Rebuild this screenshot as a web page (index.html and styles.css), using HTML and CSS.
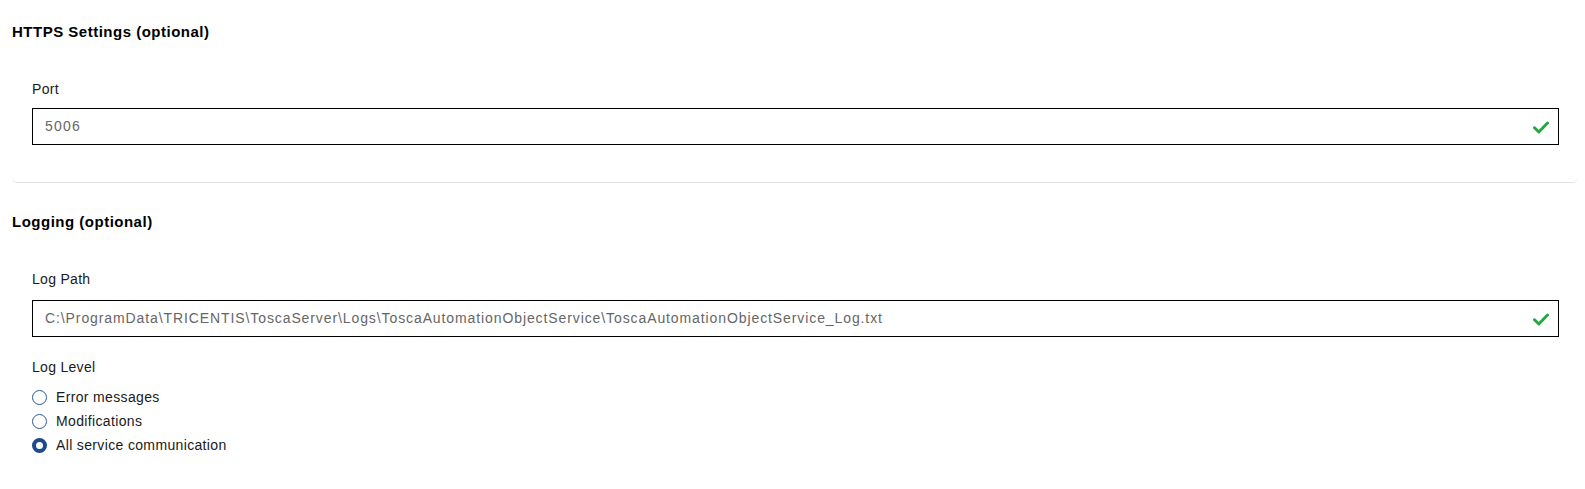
FILE: index.html
```html
<!DOCTYPE html>
<html>
<head>
<meta charset="utf-8">
<link rel="stylesheet" href="styles.css">
</head>
<body>
<div class="page">
  <section class="card first">
    <h2 class="title">HTTPS Settings (optional)</h2>
    <div class="field">
      <label class="label">Port</label>
      <div class="input">
        <span class="value">5006</span>
        <svg class="check" width="16" height="13" viewBox="0 0 16 13"><path d="M1.5 6.8 L5.8 11 L14.5 2" fill="none" stroke="#28a745" stroke-width="3" stroke-linecap="round" stroke-linejoin="round"/></svg>
      </div>
    </div>
  </section>
  <section class="card second">
    <h2 class="title">Logging (optional)</h2>
    <div class="field">
      <label class="label">Log Path</label>
      <div class="input path">
        <span class="value">C:\ProgramData\TRICENTIS\ToscaServer\Logs\ToscaAutomationObjectService\ToscaAutomationObjectService_Log.txt</span>
        <svg class="check" width="16" height="13" viewBox="0 0 16 13"><path d="M1.5 6.8 L5.8 11 L14.5 2" fill="none" stroke="#28a745" stroke-width="3" stroke-linecap="round" stroke-linejoin="round"/></svg>
      </div>
      <label class="label level">Log Level</label>
      <div class="radios">
        <div class="radio"><span class="dot"></span><span class="rtext">Error messages</span></div>
        <div class="radio"><span class="dot"></span><span class="rtext">Modifications</span></div>
        <div class="radio"><span class="dot on"></span><span class="rtext">All service communication</span></div>
      </div>
    </div>
  </section>
</div>
</body>
</html>
```

FILE: styles.css
```css
html, body {
  margin: 0;
  padding: 0;
  background: #ffffff;
}
body {
  font-family: "Liberation Sans", Arial, sans-serif;
  color: #1a1a1a;
}
.page {
  padding: 0 7px 0 12px;
}
.card {
  display: flex;
  flex-direction: column;
}
.card.first {
  padding-top: 22px;
  padding-bottom: 37px;
  border-bottom: 1px solid #e2e2e2;
  border-radius: 0 0 5px 5px;
}
.card.second {
  padding-top: 29px;
}
.title {
  margin: 0;
  font-size: 15px;
  line-height: 20px;
  font-weight: bold;
  letter-spacing: 0.5px;
  color: #000;
}
.field {
  display: flex;
  flex-direction: column;
  padding: 38px 19px 0 20px;
}
.label {
  font-size: 14px;
  line-height: 18px;
  letter-spacing: 0.3px;
  color: #1a1a1a;
  margin-bottom: 10px;
}
.input {
  display: flex;
  align-items: center;
  justify-content: space-between;
  height: 35px;
  border: 1px solid #000;
  padding: 0 9px 0 12px;
}
.input.path {
  margin-top: 2px;
}
.value {
  font-size: 14px;
  line-height: 35px;
  letter-spacing: 1.2px;
  color: #666;
  white-space: nowrap;
}
.path .value {
  letter-spacing: 0.9px;
}
.check {
  display: block;
  margin-top: 1px;
}
.level {
  margin-top: 21px;
  margin-bottom: 9px;
}
.radios {
  display: flex;
  flex-direction: column;
}
.radio {
  display: flex;
  align-items: center;
  height: 24px;
}
.dot {
  box-sizing: border-box;
  width: 15px;
  height: 15px;
  border-radius: 50%;
  border: 1px solid #2b5797;
  margin-right: 9px;
  margin-top: 1px;
  background: #fff;
}
.dot.on {
  border: 4px solid #1c4a8a;
  background: #fff;
}
.rtext {
  font-size: 14px;
  line-height: 24px;
  letter-spacing: 0.35px;
  color: #1a1a1a;
}
```
